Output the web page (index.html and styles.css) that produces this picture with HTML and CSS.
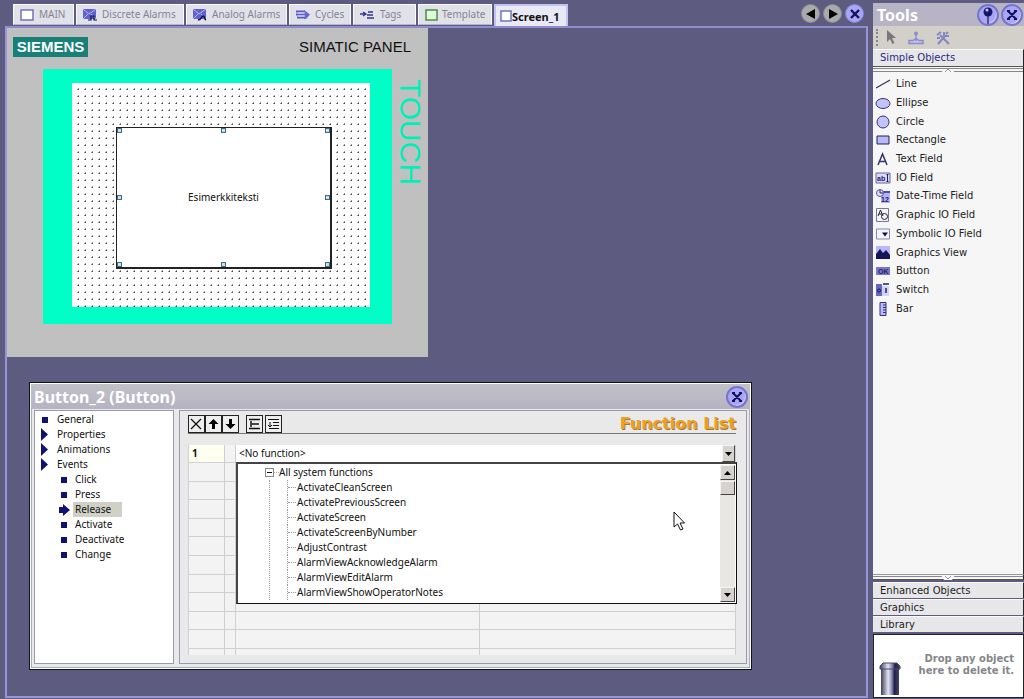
FILE: index.html
```html
<!DOCTYPE html>
<html lang="en">
<head>
<meta charset="utf-8">
<title>Screen_1</title>
<link rel="stylesheet" href="styles.css">
</head>
<body>
<main class="editor">
  <nav class="tabs" aria-label="Open documents">
    <button class="tab tab-main"><svg width="14" height="12"><rect x="1" y="1" width="12" height="10" fill="#fff" stroke="#7471b8" stroke-width="1.5"/></svg>MAIN</button>
    <button class="tab tab-discrete"><svg width="14" height="13"><path d="M0 1h13v10H0z" fill="#6262cf"/><path d="M0 1l6 5 7-5M0 11l5-5M8 6l5 5" stroke="#b3b3f5" fill="none"/><path d="M5 12h3V8h3v4h3" stroke="#111144" stroke-width="1.2" fill="none"/></svg>Discrete Alarms</button>
    <button class="tab tab-analog"><svg width="14" height="13"><path d="M0 1h13v10H0z" fill="#6262cf"/><path d="M0 1l6 5 7-5M0 11l5-5M8 6l5 5" stroke="#b3b3f5" fill="none"/><path d="M5 12c4 0 3-4 5-4 2 0 1 3 3 4" stroke="#111144" stroke-width="1.5" fill="none"/></svg>Analog Alarms</button>
    <button class="tab tab-cycles"><svg width="14" height="10"><path d="M0 1.500h9M0 4.500h9M1 7.500h8" stroke="#5a5ac4" stroke-width="2"/><path d="M8 0l6 4.500L10 9H8z" fill="#6868ca"/><path d="M2 3h7M2 6h7" stroke="#d7d7ff"/></svg>Cycles</button>
    <button class="tab tab-tags"><svg width="15" height="10"><path d="M0 4h5M3 2l3 2-3 2M8 2h5M7 5h6M7 8h7" stroke="#34348d" fill="none" stroke-width="1.3"/></svg>Tags</button>
    <button class="tab tab-template"><svg width="13" height="12"><rect x="1" y="1" width="11" height="10" fill="#ddffd6" stroke="#4d8a4e" stroke-width="1.5"/></svg>Template</button>
    <button class="tab tab-screen active"><svg width="12" height="12"><rect x="1" y="1" width="10" height="10" fill="#fff" stroke="#7471b8" stroke-width="1.5"/></svg>Screen_1</button>
    <span class="tab-nav">
      <button class="round grey" aria-label="Previous"><svg width="12" height="12"><path d="M10 1v10L1 6z"/></svg></button>
      <button class="round grey" aria-label="Next"><svg width="12" height="12"><path d="M2 1v10l9-5z"/></svg></button>
      <button class="round" aria-label="Close"><svg width="10" height="10"><path d="M1 1l8 8M9 1L1 9" fill="none" stroke="#11115c" stroke-width="2.4"/></svg></button>
    </span>
  </nav>

  <section class="workspace">
    <div class="device">
      <div class="device-head"><span class="brand">SIEMENS</span><span class="model">SIMATIC PANEL</span></div>
      <div class="device-body">
        <div class="bezel"><div class="canvas">
          <button class="sample">Esimerkkiteksti
            <i class="handle nw"></i><i class="handle n"></i><i class="handle ne"></i><i class="handle w"></i><i class="handle e"></i><i class="handle sw"></i><i class="handle s"></i><i class="handle se"></i>
          </button>
        </div></div>
        <span class="touch">TOUCH</span>
      </div>
    </div>

    <section class="window">
      <header class="window-title"><h2>Button_2 (Button)</h2>
        <button class="round large" aria-label="Close window"><svg width="12" height="12"><path d="M2 2l8 8M10 2l-8 8M1 2h3M8 2h3M1 10h3M8 10h3" fill="none" stroke="#11115c" stroke-width="2"/></svg></button>
      </header>
      <div class="window-body">
        <ul class="tree">
          <li><svg width="10" height="12"><path d="M2 3h6v6H2z"/></svg><a href="#">General</a></li>
          <li><svg width="10" height="15"><path d="M1 1l7 6.500-7 6.500z"/></svg><a href="#">Properties</a></li>
          <li><svg width="10" height="15"><path d="M1 1l7 6.500-7 6.500z"/></svg><a href="#">Animations</a></li>
          <li><svg width="10" height="15"><path d="M1 1l7 6.500-7 6.500z"/></svg><a href="#">Events</a></li>
          <li class="sub"><svg width="12" height="12"><path d="M3 3h6v6H3z"/></svg><a href="#">Click</a></li>
          <li class="sub"><svg width="12" height="12"><path d="M3 3h6v6H3z"/></svg><a href="#">Press</a></li>
          <li class="sub"><svg width="12" height="12"><path d="M1 3h4V0l7 6-7 6V9H1z"/></svg><a class="current" href="#">Release</a></li>
          <li class="sub"><svg width="12" height="12"><path d="M3 3h6v6H3z"/></svg><a href="#">Activate</a></li>
          <li class="sub"><svg width="12" height="12"><path d="M3 3h6v6H3z"/></svg><a href="#">Deactivate</a></li>
          <li class="sub"><svg width="12" height="12"><path d="M3 3h6v6H3z"/></svg><a href="#">Change</a></li>
        </ul>
        <div class="functions">
          <div class="fn-head">
            <div class="fn-tools">
              <button aria-label="Delete"><svg width="15" height="16"><path d="M2 3l10 10M12 3L2 13" stroke="#111" stroke-width="1.3"/></svg></button>
              <button aria-label="Move up"><svg width="15" height="16"><path d="M7.500 3l5 5H9v5H6V8H2.500z"/></svg></button>
              <button aria-label="Move down"><svg width="15" height="16"><path d="M7.500 13l5-5H9V3H6v5H2.500z"/></svg></button>
              <button class="apart" aria-label="Collapse"><svg width="15" height="16"><path d="M2 3.500h11M2 12.500h11M5 8h7M4 5v6" stroke="#111" stroke-width="1.500"/></svg></button>
              <button aria-label="Expand"><svg width="15" height="16"><path d="M2 3.500h11M7 6.500h6M7 9.500h6M3 12.500h10M4 6v5M2 9l2 2 2-2" fill="none" stroke="#111"/></svg></button>
            </div>
            <h3>Function List</h3>
          </div>
          <div class="grid">
            <table>
              <colgroup><col class="c-num"><col class="c-gap"><col class="c-name"><col></colgroup>
              <tbody>
              <tr class="first"><th scope="row">1</th><td></td><td colspan="2"><div class="combo"><select aria-label="Function"><option>&lt;No function&gt;</option></select><span class="drop"><svg width="7" height="4"><path d="M0 0h7L3.500 4z"/></svg></span></div></td></tr>
              <tr><td></td><td></td><td></td><td></td></tr><tr><td></td><td></td><td></td><td></td></tr>
              <tr><td></td><td></td><td></td><td></td></tr><tr><td></td><td></td><td></td><td></td></tr>
              <tr><td></td><td></td><td></td><td></td></tr><tr><td></td><td></td><td></td><td></td></tr>
              <tr><td></td><td></td><td></td><td></td></tr><tr><td></td><td></td><td></td><td></td></tr>
              <tr><td></td><td></td><td></td><td></td></tr><tr><td></td><td></td><td></td><td></td></tr>
              <tr class="last"><td></td><td></td><td></td><td></td></tr>
              </tbody>
            </table>
            <div class="menu">
              <div class="menu-tree">
                <div class="root"><svg width="14" height="9"><rect x=".5" y=".5" width="8" height="8" fill="#fff" stroke="#888"/><path d="M2 4.500h5" stroke="#111"/><path d="M9 4.500h5" stroke="#aaa" stroke-dasharray="1 1"/></svg>All system functions</div>
                <ul>
                  <li>ActivateCleanScreen</li><li>ActivatePreviousScreen</li><li>ActivateScreen</li><li>ActivateScreenByNumber</li><li>AdjustContrast</li><li>AlarmViewAcknowledgeAlarm</li><li>AlarmViewEditAlarm</li><li>AlarmViewShowOperatorNotes</li>
                </ul>
              </div>
              <div class="scroll">
                <button aria-label="Scroll up"><svg width="7" height="4"><path d="M0 4h7L3.500 0z"/></svg></button>
                <span class="thumb"></span>
                <button aria-label="Scroll down"><svg width="7" height="4"><path d="M0 0h7L3.500 4z"/></svg></button>
              </div>
              <svg class="pointer" width="13" height="20"><path d="M1 1v15l3.500-3L7.500 19l2.500-1-3-6h4.500z" fill="#fff" stroke="#111"/></svg>
            </div>
          </div>
        </div>
      </div>
    </section>
  </section>
</main>

<aside class="tools">
  <header class="tools-title"><h2>Tools</h2>
    <button class="round large" aria-label="Pin"><svg width="12" height="18"><path d="M6 9v9" stroke="#333377" stroke-width="1.500"/><circle cx="6" cy="6" r="4.500" fill="#16166f"/><circle cx="5" cy="4" r="1.500" fill="#c9c9ff"/></svg></button>
    <button class="round large" aria-label="Close tools"><svg width="12" height="12"><path d="M2 2l8 8M10 2l-8 8M1 2h3M8 2h3M1 10h3M8 10h3" fill="none" stroke="#11115c" stroke-width="2"/></svg></button>
  </header>
  <div class="tools-bar">
    <span class="grip"></span>
    <button aria-label="Select"><svg width="10" height="15"><path d="M1 0v12l3-3 2.500 5 2-1-2.500-5h4z" fill="#77777c"/></svg></button>
    <button aria-label="Stamp"><svg width="16" height="14"><circle cx="8" cy="2.500" r="2" fill="#8d8dcb"/><path d="M8 3v7M1 9.500h4l3-2 3 2h4v3H1z" fill="#c5c5ee" stroke="#8d8dcb" stroke-width="1.500"/></svg></button>
    <button aria-label="Settings"><svg width="15" height="14"><path d="M4 4l9 9M9 5l-7 8" stroke="#8585c4" stroke-width="2"/><path d="M1 4l4-3M8 1v4h5M12 1l-2 2M1 7h3" fill="none" stroke="#8585c4" stroke-width="2"/></svg></button>
  </div>
  <button class="group open">Simple Objects</button>
  <div class="rail top"><svg width="14" height="6"><path d="M0 6l3-4h8l3 4z" fill="#f6f6f6"/><path d="M4 5l3-3 3 3" fill="none" stroke="#999"/></svg></div>
  <div class="objects-wrap">
  <ul class="objects">
    <li><svg viewBox="0 0 16 14"><path d="M1 11L15 3" stroke="#33335f" stroke-width="1.200"/></svg>Line</li>
    <li><svg viewBox="0 0 16 14"><ellipse cx="8" cy="7.500" rx="7" ry="5" fill="#c3c3fb" stroke="#33336b"/></svg>Ellipse</li>
    <li><svg viewBox="0 0 16 14"><circle cx="8" cy="7" r="6" fill="#c3c3fb" stroke="#33336b"/></svg>Circle</li>
    <li><svg viewBox="0 0 16 14"><path d="M2 3h12v8H2z" fill="#b9b9f8" stroke="#222255"/></svg>Rectangle</li>
    <li><svg viewBox="0 0 16 14"><path d="M3 13L7.500 2 12 13M5 9.500h5.500" fill="none" stroke="#33336b" stroke-width="1.500"/></svg>Text Field</li>
    <li><svg viewBox="0 0 16 14"><path d="M1 2h14v10H1z" fill="#d8d8ff" stroke="#66669b"/><text class="glyph" x="2" y="10">ab</text><path d="M12.500 3.500v7M11.500 3.500h2M11.500 10.500h2" stroke="#222255"/></svg>IO Field</li>
    <li><svg viewBox="0 0 16 14"><path d="M6 3h9v11H6z" fill="#b3b3f3"/><path d="M8 3h7" stroke="#4c4caa" stroke-width="2"/><circle cx="5" cy="4" r="3.500" fill="#e1e1ff" stroke="#555599"/><path d="M5 1v3h3" fill="none" stroke="#222255"/><text class="glyph" x="6" y="13">12</text></svg>Date-Time Field</li>
    <li><svg viewBox="0 0 16 14"><path d="M1.500.500h12v13h-12z" fill="#f4f4fa" stroke="#777791"/><path d="M3 8l2.500-6L8 8M4 6h3" fill="none" stroke="#222"/><circle cx="9.500" cy="8.500" r="3" fill="none" stroke="#222"/></svg>Graphic IO Field</li>
    <li><svg viewBox="0 0 16 14"><path d="M1.500 2h13v10h-13z" fill="#f4f4ff" stroke="#8888ae"/><path d="M7 5.500h6l-3 4z" fill="#111133"/></svg>Symbolic IO Field</li>
    <li><svg viewBox="0 0 16 14"><path d="M1 0h14v13H1z" fill="#b9b9fa"/><path d="M1 8l4-5 3 4 3-3 4 5v4H1z" fill="#151558"/></svg>Graphics View</li>
    <li><svg viewBox="0 0 16 14"><path d="M1 3h14v8H1z" fill="#7878cc"/><text class="glyph" x="3" y="10">OK</text></svg>Button</li>
    <li><svg viewBox="0 0 16 14"><path d="M1 1h6v12H1z" fill="#6666c5"/><path d="M7 3h7v10H7z" fill="#d1d1ff"/><path d="M8 1h6" stroke="#222255" stroke-width="1.500"/><circle cx="4" cy="7.500" r="1.500" fill="none" stroke="#111155"/><path d="M11 5v5" stroke="#222255" stroke-width="1.500"/></svg>Switch</li>
    <li><svg viewBox="0 0 16 14"><path d="M5 .500h6v13H5z" fill="#babafa" stroke="#33337b"/><path d="M8 3h3M8 5.500h3M8 8h3M8 10.500h3" stroke="#33337b"/></svg>Bar</li>
  </ul>
  </div>
  <div class="rail bottom"><svg width="14" height="6"><path d="M0 0l3 5h8l3-5z" fill="#f6f6f6"/><path d="M4 1l3 3 3-3" fill="none" stroke="#999"/></svg></div>
  <button class="group">Enhanced Objects</button>
  <button class="group">Graphics</button>
  <button class="group">Library</button>
  <div class="trash">
    <svg width="22" height="34"><defs><linearGradient id="can"><stop offset="0" stop-color="#3d3d5d"/><stop offset=".4" stop-color="#e4e4f1"/><stop offset=".6" stop-color="#8a8aad"/><stop offset=".75" stop-color="#20204e"/><stop offset="1" stop-color="#454566"/></linearGradient></defs><path d="M2 6h18v27H2z" fill="url(#can)"/><path d="M1 7V4l3-3h14l3 3v3z" fill="url(#can)" stroke="#4b4b68"/></svg>
    <p>Drop any object<br>here to delete it.</p>
  </div>
</aside>
</body>
</html>
```
FILE: styles.css
```css
* { box-sizing: border-box; }
body {
  margin: 0;
  display: flex;
  min-height: 100vh;
  background: #5e5b80;
  color: #111;
  font: 10px/15px "Noto Sans", "Open Sans", sans-serif;
}
button { margin: 0; padding: 0; border: 0; background: none; font: inherit; color: inherit; }
h2, h3, p, ul { margin: 0; padding: 0; }
ul { list-style: none; }
a { color: inherit; text-decoration: none; }
svg { flex: none; display: block; }

.editor { flex: 1; min-width: 0; display: flex; flex-direction: column; padding: 4px 5px 1px 5px; }

/* document tabs */
.tabs { display: flex; gap: 2px; padding-left: 8px; height: 22px; }
.tab {
  display: flex; align-items: center; gap: 5px;
  height: 21px; padding: 0 6px;
  background: #e1e1ea; border: 1px solid #fafaff; border-bottom-color: #b5b5cf;
  color: #85858c; white-space: nowrap;
}
.tab-main { width: 61px; }
.tab-discrete { width: 108px; }
.tab-analog { width: 101px; }
.tab-cycles { width: 62px; }
.tab-tags { width: 63px; }
.tab-template { width: 74px; gap: 4px; }
.tab.active {
  width: 74px; height: 22px; padding: 0 4px; gap: 0;
  background: #e9e9f6; border: 2px solid #c3c1f3; border-bottom: 0; color: #111; font-weight: bold;
  font-size: 11px;
}
.tab-nav { display: flex; gap: 3px; margin: 0 4px 0 auto; }
.round {
  width: 19px; height: 19px; border-radius: 50%;
  display: flex; align-items: center; justify-content: center;
  background: #a9a7f5; border: 1px solid #8583d2;
}
.round.grey { background: #aaaaae; border-color: #8b8b92; }
.round.large { width: 22px; height: 22px; border: 2px solid #7775cb; box-shadow: inset -1px -1px 0 #c9c7ff; }

.workspace { flex: 1; border: 2px solid #9995dc; border-top-color: #8f8bce; padding-bottom: 20px; }

/* operator panel being edited */
.device { width: 421px; background: #c0c0c0; padding: 9px 5px 33px 6px; }
.device-head { display: flex; justify-content: space-between; align-items: center; padding-right: 12px; }
.brand {
  width: 75px; height: 20px; background: #168079; color: #fff; text-align: center;
  font: bold 15px/20px "Liberation Sans", sans-serif;
}
.model { font: 15px/20px "Liberation Sans", sans-serif; }
.device-body { display: flex; gap: 5px; padding: 12px 0 0 30px; }
.bezel { flex: 1; background: #00ffc6; padding: 14px 22px 17px 29px; }
.canvas {
  height: 224px; padding: 44px 38px 38px 44px;
  background: #fff radial-gradient(circle, #444 0, #999 1px, transparent 1px) -4px -4px / 7px 7px;
}
.touch { writing-mode: vertical-rl; color: #00efb8; font: 30px/26px "Liberation Sans", sans-serif; padding-top: 10px; }
.sample {
  position: relative; width: 100%; height: 142px;
  background: #fff; border: 1px solid #222; border-right-width: 2px; border-bottom-width: 2px;
}
.handle { position: absolute; width: 5px; height: 5px; background: #c3e3f2; border: 1px solid #456a80; }
.nw, .n, .ne { top: 0; }
.sw, .s, .se { bottom: 0; }
.nw, .w, .sw { left: 0; }
.ne, .e, .se { right: 0; }
.n, .s { left: 50%; margin-left: -3px; }
.w, .e { top: 50%; margin-top: -3px; }

/* property window */
.window {
  margin: 25px 114px 0 22px; background: #e9e9ea;
  border: 1px solid #111122; box-shadow: inset 0 0 0 1px #fff, inset 0 0 0 2px #aaaabd;
}
.window-title {
  display: flex; align-items: center; justify-content: space-between;
  height: 25px; margin: 1px 1px 0; padding: 0 2px 0 3px;
  background: linear-gradient(#c1c1c6, #b5b3c4);
}
.window-title h2, .tools-title h2 { color: #fff; font: bold 16px/22px "Noto Sans", sans-serif; }
.window-body { display: flex; gap: 5px; padding: 1px 4px 5px; }
.tree { width: 140px; border: 1px solid #9a9aaa; background: #fff; padding: 1px 0 0 5px; }
.tree li { display: flex; align-items: center; height: 15px; }
.tree li a { padding-left: 7px; }
.tree li.sub { padding-left: 18px; }
.tree li.sub a { padding: 0 11px 0 5px; }
.tree li.sub .current { background: #d1d0c7; margin-left: 3px; padding-left: 2px; }
.tree svg { fill: #11116f; }

.functions { flex: 1; min-width: 0; border: 1px solid #9a9aaa; padding: 3px 10px 8px 8px; }
.fn-head { display: flex; justify-content: space-between; align-items: center; height: 20px; border-bottom: 1px solid #777; }
.fn-tools { display: flex; }
.fn-tools button { border: 1px solid #222; background: #eee; width: 17px; height: 18px; display: flex; align-items: center; justify-content: center; }
.fn-tools .apart { margin-left: 7px; margin-right: 2px; }
h3 { color: #f0a020; font: bold 16px/18px "DejaVu Sans", sans-serif; text-shadow: 1px 1px 0 #9a7a42; }
.grid { position: relative; margin-top: 11px; }
table { width: 100%; height: 210px; border-collapse: separate; border-spacing: 0; table-layout: fixed; background: #f3f3f3; }
.c-num { width: 37px; }
.c-gap { width: 11px; }
.c-name { width: 244px; }
td, th { padding: 0; border-right: 1px solid #d0d0d2; border-bottom: 1px solid #d0d0d2; }
tr > :first-child { border-left: 1px solid #d0d0d2; }
.first { height: 18px; }
.first th { background: #fffff0; text-align: left; padding-left: 3px; line-height: 15px; }
.last { height: 6px; }
.last td { border-bottom: 0; }
.combo { display: flex; height: 17px; background: #fff; }
select { appearance: none; flex: 1; border: 0; background: #fff; font: inherit; color: inherit; padding: 0 3px; }
.drop, .scroll button, .thumb {
  display: flex; align-items: center; justify-content: center;
  width: 15px; height: 15px; background: #d6d3ce; border: 1px solid #f4f4f4; border-right-color: #444; border-bottom-color: #444;
}
.drop { width: 13px; height: 17px; }
.menu {
  position: absolute; top: 17px; left: 48px; right: -1px; height: 142px;
  display: flex; background: #fff; border: 1px solid #111; border-top: 2px solid #444; border-left: 2px solid #444; padding: 1px;
}
.menu-tree { flex: 1; padding-left: 26px; }
.root { display: flex; align-items: center; height: 15px; }
.menu-tree ul { margin-left: 4px; border-left: 1px dotted #999; padding-left: 17px; }
.menu-tree li { height: 15px; border-left: 1px dotted #999; display: flex; align-items: center; }
.menu-tree li::before { content: ""; width: 8px; margin-right: 1px; border-top: 1px dotted #999; }
.scroll { width: 15px; display: flex; flex-direction: column; background: #e8e7e3; }
.thumb { height: 14px; margin: 1px 0 auto; }
.pointer { position: absolute; right: 50px; top: 47px; }

/* tool palette */
.tools { width: 151px; display: flex; flex-direction: column; padding: 3px 0 1px; color: #222; font: 10px/14px "DejaVu Sans", sans-serif; background: #5e5b80; }
.tools-title { display: flex; align-items: center; gap: 2px; height: 23px; padding: 0 1px 0 4px; background: #b7b5c5; }
.tools-title h2 { margin-right: auto; }
.tools-bar { display: flex; align-items: center; gap: 12px; height: 23px; background: #d2d0c8; padding-left: 3px; }
.grip { width: 2px; height: 17px; margin-right: -4px; border-left: 2px dotted #888; }
.group { height: 16px; margin-bottom: 1px; padding-left: 7px; text-align: left; line-height: 15px; background: #e7e7ea; border-right: 1px solid #222; border-top: 1px solid #fafafa; }
.group.open { color: #2a2a80; height: 17px; margin: 0; padding-bottom: 3px; }
.rail { height: 6px; display: flex; justify-content: center; border-style: solid; border-color: #555 #222 #888 #888; border-width: 1px 1px 0 0; }
.rail.top { background: linear-gradient(#f6f6f6 1px, #888 1px 2px, #f6f6f6 2px 4px, #888 4px 5px); }
.rail.bottom { margin-bottom: 2px; border-top-color: #999; border-bottom: 1px solid #555; background: linear-gradient(#f6f6f6 1px, #888 1px 2px, #f6f6f6 2px); }
.objects-wrap { flex: 1; background: #f6f6f6; border-right: 1px solid #222; padding-top: 3px; }
.objects { display: grid; grid-auto-rows: 1fr; height: 243px; padding-left: 2px; }
.objects li { display: flex; align-items: center; gap: 5px; }
.objects svg { width: 16px; height: 14px; }
.glyph { font: bold 7px "Liberation Sans", sans-serif; fill: #222266; }
.trash { display: flex; align-items: flex-end; justify-content: space-between; height: 64px; margin-top: 1px; padding: 0 9px 1px 5px; background: #fff; border: 1px solid #222; }
.trash p { text-align: right; font-weight: bold; line-height: 12px; color: #85858a; padding-bottom: 19px; white-space: nowrap; }
```
